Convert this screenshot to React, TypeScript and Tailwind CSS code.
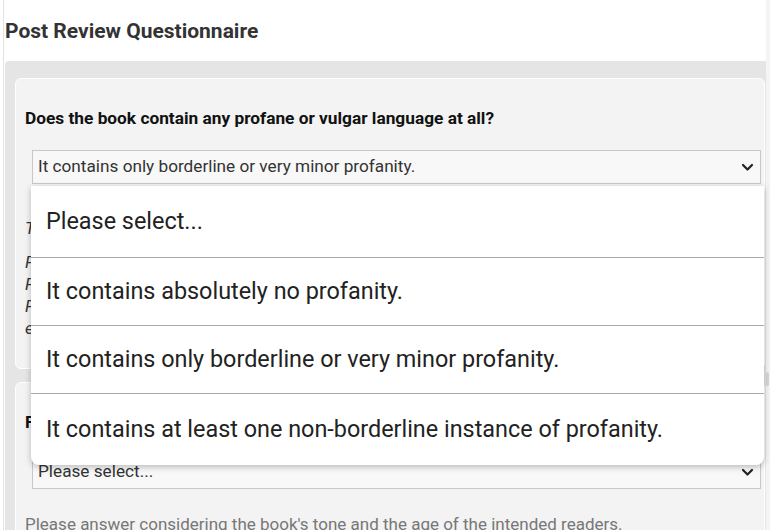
import React from "react";

const options = [
  "Please select...",
  "It contains absolutely no profanity.",
  "It contains only borderline or very minor profanity.",
  "It contains at least one non-borderline instance of profanity.",
];

const rowHeights = ["h-[71px]", "h-[68px]", "h-[68px]", "h-[72px]"];

const Chevron = () => (
  <svg width="13" height="9" viewBox="0 0 13 9" className="shrink-0">
    <polyline
      points="2,2 6.5,6.5 11,2"
      fill="none"
      stroke="#222"
      strokeWidth="2.2"
      strokeLinecap="round"
      strokeLinejoin="round"
    />
  </svg>
);

const SelectBox = ({ value }: { value: string }) => (
  <div className="ml-[7px] h-[34px] flex items-center justify-between border border-[#c8c8c8] bg-[#f8f8f8] pl-[5px] pr-[6px] text-[17.2px] text-[#333]">
    <span>{value}</span>
    <Chevron />
  </div>
);

const App = () => {
  return (
    <div className="relative min-h-screen h-[530px] overflow-hidden bg-white font-['Roboto',sans-serif] flex">
      <div className="flex-1 ml-[3px] border-l border-[#e2e2e2] pl-px">
        <h1 className="pt-[17px] text-[21px] leading-7 font-bold text-[#333]">
          Post Review Questionnaire
        </h1>

        <div className="mt-[16px] bg-[#e5e5e5] rounded-tl-sm pl-[10px] pr-[1px] pt-[17px] pb-10">
          {/* first question */}
          <div className="rounded-md border border-white bg-[#f3f3f3] pl-[9px] pr-[3px] pt-[28px] pb-[29px]">
            <p className="text-[17.3px] leading-[22px] font-bold text-[#111]">
              Does the book contain any profane or vulgar language at all?
            </p>
            <div className="mt-[21px]">
              <SelectBox value="It contains only borderline or very minor profanity." />
            </div>
            <p className="mt-[33px] text-[17px] leading-[22px] italic text-[#333]">
              The answer to this question affects the age rating shown for the book.
            </p>
            <p className="mt-[12px] text-[17px] leading-[22px] italic text-[#333]">
              Profanity includes swear words and crude language of any kind.
              <br />
              Phrases such as "darn" or "heck" are borderline profanity.
              <br />
              Please count words used by any character, including the narrator.
              <br />
              e.g. a single mild curse in the whole book counts as borderline.
            </p>
          </div>

          {/* second question */}
          <div className="mt-[13px] rounded-md border border-white bg-[#f3f3f3] pl-[9px] pr-[3px] pt-[28px] pb-[28px]">
            <p className="text-[17.3px] leading-[22px] font-bold text-[#111]">
              Fighting or violence: how graphic is it in the book?
            </p>
            <div className="mt-[22px]">
              <SelectBox value="Please select..." />
            </div>
            <p className="mt-[24px] text-[17px] leading-[22px] text-[#777]">
              Please answer considering the book's tone and the age of the intended readers.
            </p>
          </div>
        </div>
      </div>

      {/* scrollbar track */}
      <div className="w-[4px] bg-[#f4f4f4] relative">
        <div className="absolute left-0 top-[372px] h-[14px] w-[3px] rounded-full bg-[#d6d6d6]" />
      </div>

      {/* open native-style dropdown */}
      <div className="absolute left-[31px] top-[186px] w-[733px] rounded-b-lg bg-white shadow-[0_2px_6px_rgba(0,0,0,0.25)] overflow-hidden">
        {options.map((o, i) => (
          <div
            key={o}
            className={
              rowHeights[i] +
              " flex items-center pl-[15px] text-[23.4px] text-[#222] " +
              (i > 0 ? "border-t border-[#aaa]" : "")
            }
          >
            {o}
          </div>
        ))}
      </div>
    </div>
  );
};

export default App;
